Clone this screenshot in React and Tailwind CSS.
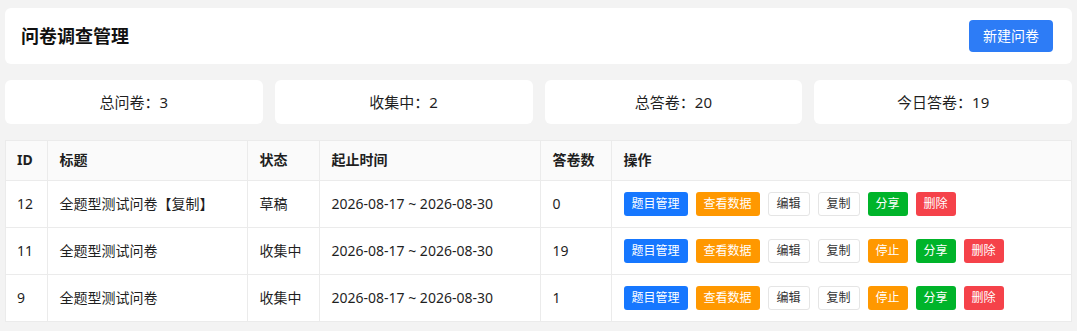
const FONT = { fontFamily: '"Noto Sans", "Noto Sans CJK SC", sans-serif' };

const stats = [
  { label: '总问卷', value: 3 },
  { label: '收集中', value: 2 },
  { label: '总答卷', value: 20 },
  { label: '今日答卷', value: 19 },
];

const surveys = [
  { id: 12, title: '全题型测试问卷【复制】', status: '草稿', range: '2026-08-17 ~ 2026-08-30', count: 0, running: false },
  { id: 11, title: '全题型测试问卷', status: '收集中', range: '2026-08-17 ~ 2026-08-30', count: 19, running: true },
  { id: 9, title: '全题型测试问卷', status: '收集中', range: '2026-08-17 ~ 2026-08-30', count: 1, running: true },
];

function Btn({ kind, children }) {
  const styles = {
    blue: 'bg-[#1677ff] text-white',
    orange: 'bg-[#ff9800] text-white',
    green: 'bg-[#00b42a] text-white',
    red: 'bg-[#f5424a] text-white',
    plain: 'bg-white text-[#333] border border-[#e5e5e5]',
  };
  return (
    <button className={`h-6 px-2 rounded-[3px] text-xs leading-none cursor-pointer ${styles[kind]}`}>
      {children}
    </button>
  );
}

export default function App() {
  return (
    <div className="min-h-[331px] bg-[#f3f3f3] pt-2 px-[5px] pb-3 text-[#1f1f1f]" style={FONT}>
      {/* Header */}
      <div className="bg-white rounded-md h-14 pl-4 pr-[19px] flex items-center justify-between mb-4">
        <h1 className="text-lg font-bold text-[#111]">问卷调查管理</h1>
        <button className="h-8 w-[84px] rounded bg-[#2d7cf6] text-white text-sm">新建问卷</button>
      </div>

      {/* Stats */}
      <div className="grid grid-cols-4 gap-3 mb-4">
        {stats.map(s => (
          <div key={s.label} className="bg-white rounded-md h-11 flex items-center justify-center text-[15px]">
            {s.label}：{s.value}
          </div>
        ))}
      </div>

      {/* Table */}
      <div className="bg-white border border-[#ebebeb]">
        <table className="w-full border-collapse text-sm text-left">
          <thead>
            <tr className="bg-[#fafafa] h-[39px] font-bold">
              <th className="w-[41px] pl-[11px] pr-2 border-r border-b border-[#ebebeb]">ID</th>
              <th className="w-[200px] px-3 border-r border-b border-[#ebebeb]">标题</th>
              <th className="w-[72px] px-3 border-r border-b border-[#ebebeb]">状态</th>
              <th className="w-[221px] px-3 border-r border-b border-[#ebebeb]">起止时间</th>
              <th className="w-[71px] px-3 border-r border-b border-[#ebebeb]">答卷数</th>
              <th className="px-3 border-b border-[#ebebeb]">操作</th>
            </tr>
          </thead>
          <tbody>
            {surveys.map((s, i) => (
              <tr key={s.id} className="h-[47px]">
                <td className={`pl-[11px] pr-2 border-r border-[#ebebeb] ${i < surveys.length - 1 ? 'border-b' : ''}`}>{s.id}</td>
                <td className={`px-3 border-r border-[#ebebeb] ${i < surveys.length - 1 ? 'border-b' : ''}`}>{s.title}</td>
                <td className={`px-3 border-r border-[#ebebeb] ${i < surveys.length - 1 ? 'border-b' : ''}`}>{s.status}</td>
                <td className={`px-3 border-r border-[#ebebeb] ${i < surveys.length - 1 ? 'border-b' : ''}`}>{s.range}</td>
                <td className={`px-3 border-r border-[#ebebeb] ${i < surveys.length - 1 ? 'border-b' : ''}`}>{s.count}</td>
                <td className={`px-3 border-[#ebebeb] ${i < surveys.length - 1 ? 'border-b' : ''}`}>
                  <div className="flex items-center gap-2">
                    <Btn kind="blue">题目管理</Btn>
                    <Btn kind="orange">查看数据</Btn>
                    <Btn kind="plain">编辑</Btn>
                    <Btn kind="plain">复制</Btn>
                    {s.running && <Btn kind="orange">停止</Btn>}
                    <Btn kind="green">分享</Btn>
                    <Btn kind="red">删除</Btn>
                  </div>
                </td>
              </tr>
            ))}
          </tbody>
        </table>
      </div>
    </div>
  );
}
